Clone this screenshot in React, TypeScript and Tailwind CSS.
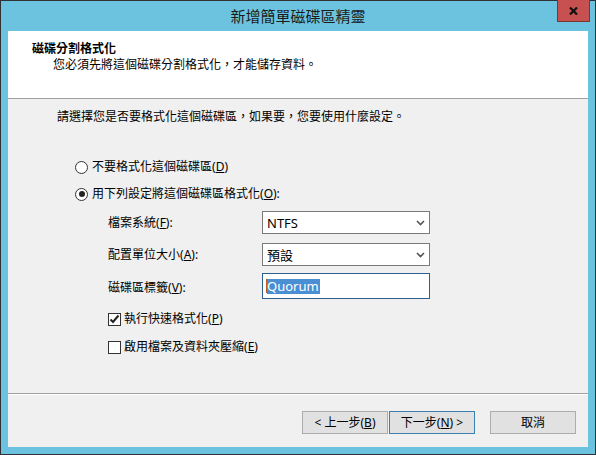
import React from 'react';

const font = "font-['Noto_Sans','Noto_Sans_CJK_TC',sans-serif]";

const Key = ({ k }: { k: string }) => (
  <>
    (<span className="underline underline-offset-[1px]">{k}</span>)
  </>
);

const Chevron = () => (
  <svg width="9" height="6" viewBox="0 0 9 6" className="mr-[4px]">
    <path d="M1 1 L4.5 4.5 L8 1" fill="none" stroke="#555" strokeWidth="1.6" />
  </svg>
);

const Radio = ({ checked }: { checked?: boolean }) => (
  <span className="w-[13px] h-[13px] rounded-full border border-[#333] bg-white flex items-center justify-center">
    {checked && <span className="w-[6px] h-[6px] rounded-full bg-[#222]" />}
  </span>
);

const Check = ({ checked }: { checked?: boolean }) => (
  <span className="w-[13px] h-[13px] border border-[#333] bg-white flex items-center justify-center">
    {checked && (
      <svg width="11" height="10" viewBox="0 0 11 10">
        <path d="M1.5 5.5 L4 8 L9.5 1.5" fill="none" stroke="#222" strokeWidth="2" />
      </svg>
    )}
  </span>
);

export default function App() {
  return (
    <div className={`${font} w-[596px] h-[455px] border border-[#2e3234] bg-[#6bc3df] flex flex-col text-[12px] text-black`}>
      {/* title bar */}
      <div className="relative h-[30px] flex items-center justify-center shrink-0">
        <span className="text-[15px] text-[#1b1b1b]">新增簡單磁碟區精靈</span>
        <div className="absolute right-[5px] top-[-1px] w-[33px] h-[22px] bg-[#c75050] border border-[#7f3434] border-t-0 flex items-center justify-center">
          <svg width="9" height="8" viewBox="0 0 9 8">
            <path d="M1 0.5 L8 7.5 M8 0.5 L1 7.5" stroke="#111" strokeWidth="2.2" />
          </svg>
        </div>
      </div>

      <div className="mx-[7px] mb-[7px] flex-1 flex flex-col bg-[#f0f0f0]">
        {/* header */}
        <div className="h-[68px] bg-white border-b border-[#a0a0a0] pt-[10px] shrink-0 leading-[16px]">
          <div className="pl-[24px] font-bold">磁碟分割格式化</div>
          <div className="pl-[45px]">您必須先將這個磁碟分割格式化，才能儲存資料。</div>
        </div>

        {/* body */}
        <div className="flex-1 flex flex-col leading-[16px]">
          <div className="pl-[49px] mt-[10px]">請選擇您是否要格式化這個磁碟區，如果要，您要使用什麼設定。</div>

          <div className="pl-[67px] mt-[34px] flex items-center gap-[4px]">
            <Radio />
            <span>不要格式化這個磁碟區<Key k="D" /></span>
          </div>
          <div className="pl-[67px] mt-[11px] flex items-center gap-[4px]">
            <Radio checked />
            <span>用下列設定將這個磁碟區格式化<Key k="O" />:</span>
          </div>

          <div className="pl-[100px] mt-[9px] flex items-center">
            <span className="w-[154px]">檔案系統<Key k="F" />:</span>
            <div className="w-[168px] h-[23px] bg-white border border-[#7a7a7a] flex items-center justify-between pl-[4px]">
              <span className="text-[13px]">NTFS</span>
              <Chevron />
            </div>
          </div>
          <div className="pl-[100px] mt-[9px] flex items-center">
            <span className="w-[154px]">配置單位大小<Key k="A" />:</span>
            <div className="w-[168px] h-[23px] bg-white border border-[#7a7a7a] flex items-center justify-between pl-[4px]">
              <span className="text-[13px]">預設</span>
              <Chevron />
            </div>
          </div>
          <div className="pl-[100px] mt-[7px] flex items-center">
            <span className="w-[154px] pt-[3px]">磁碟區標籤<Key k="V" />:</span>
            <div className="w-[168px] h-[26px] bg-white border border-[#2d5f8e] flex items-center pl-[3px]">
              <span className="w-px h-[14px] bg-[#c0581c]" />
              <span className="text-[13px] text-white bg-[#4a8ed4] leading-[15px] pr-px">Quorum</span>
            </div>
          </div>

          <div className="pl-[100px] mt-[12px] flex items-center gap-[3px]">
            <Check checked />
            <span>執行快速格式化<Key k="P" /></span>
          </div>
          <div className="pl-[100px] mt-[12px] flex items-center gap-[3px]">
            <Check />
            <span>啟用檔案及資料夾壓縮<Key k="E" /></span>
          </div>
        </div>

        {/* footer */}
        <div className="h-[54px] border-t border-[#a0a0a0] shrink-0">
          <div className="h-full border-t border-white flex items-start justify-end pt-[16px] pr-[12px]">
            <button className="w-[86px] h-[23px] bg-[#e1e1e1] border border-[#adadad] flex items-center justify-center">
              &lt; 上一步<Key k="B" />
            </button>
            <button className="ml-[1px] w-[86px] h-[23px] bg-[#e1e1e1] border border-[#3c7fb1] flex items-center justify-center">
              下一步<Key k="N" /> &gt;
            </button>
            <button className="ml-[15px] w-[86px] h-[23px] bg-[#e1e1e1] border border-[#adadad] flex items-center justify-center">
              取消
            </button>
          </div>
        </div>
      </div>
    </div>
  );
}
